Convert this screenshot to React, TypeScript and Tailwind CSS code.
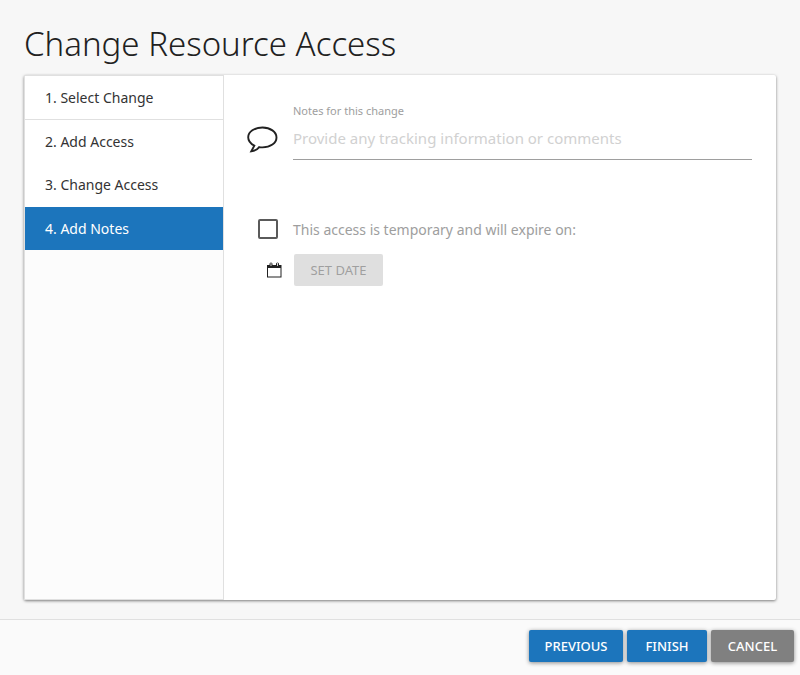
import { useState } from "react";

const steps = ["Select Change", "Add Access", "Change Access", "Add Notes"];

const CommentIcon = () => (
  <svg viewBox="0 0 32 28" className="h-7 w-8 shrink-0" fill="none" stroke="#212121" strokeWidth="1.9" strokeLinejoin="miter" aria-hidden="true">
    <path d="M16.500 1.500C8.500 1.500 2.200 5.800 2.200 11.300C2.200 14.700 4.400 17.700 8.300 19.700L5.300 25.300C9 24.800 11.300 23.600 13.200 21.100C14.200 21.300 15.300 21.400 16.500 21.400C24.300 21.400 30.500 17.200 30.500 11.500C30.500 5.800 24.300 1.500 16.500 1.500Z" />
  </svg>
);

const CalendarIcon = () => (
  <svg viewBox="0 0 16 16" className="size-4 shrink-0" fill="none" stroke="#212121" aria-hidden="true">
    <rect x="1.500" y="3.500" width="13.500" height="11.500" />
    <path d="M1.500 4.500H15" strokeWidth="3" />
    <path d="M5 2V4M11.500 2V4" strokeWidth="3" strokeLinecap="round" />
    <path d="M5 1V4M11.500 1V4" stroke="#d0d0d0" strokeWidth="1" />
  </svg>
);

const raised = "h-8 rounded-xs pt-px text-[13px] font-medium text-white shadow-[0_1px_4px_rgba(0,0,0,0.45)]";

export default function App() {
  const [current, setCurrent] = useState(3);
  const [notes, setNotes] = useState("");
  const [temporary, setTemporary] = useState(false);

  return (
    <div className="flex min-h-screen flex-col bg-[#f7f7f7] font-['Noto_Sans','Open_Sans',sans-serif] text-[#212121]">
      <main className="flex flex-1 flex-col px-6 pt-5 pb-[19px]">
        <h1 className="pb-[7px] text-[33px] leading-12 font-light">Change Resource Access</h1>

        <section className="flex flex-1 rounded-xs bg-white shadow-[0_1px_3px_rgba(0,0,0,0.5)]">
          <nav className="w-[200px] shrink-0 border border-[#e0e0e0] bg-[#fcfcfc]">
            <ol>
              {steps.map((step, i) => (
                <li key={step} className="bg-white first:border-b first:border-[#e0e0e0] last:pt-px">
                  <button
                    type="button"
                    onClick={() => setCurrent(i)}
                    aria-current={i === current ? "step" : undefined}
                    className={`block h-[43px] w-full px-5 text-left text-sm ${i === current ? "bg-[#1c75bc] text-white" : "text-[#333]"}`}
                  >
                    {i + 1}. {step}
                  </button>
                </li>
              ))}
            </ol>
          </nav>

          <form className="flex-1 pt-6 pr-6 pl-[22px]" onSubmit={(e) => e.preventDefault()}>
            <div className="flex items-end">
              <div className="mr-[15px] pb-1.5">
                <CommentIcon />
              </div>
              <div className="flex-1">
                <label htmlFor="notes" className="block text-[11px] leading-6 text-[#9e9e9e]">
                  Notes for this change
                </label>
                <input
                  id="notes"
                  type="text"
                  value={notes}
                  onChange={(e) => setNotes(e.target.value)}
                  placeholder="Provide any tracking information or comments"
                  className="block h-[37px] w-full border-b border-[#9e9e9e] pb-1.5 text-[15px] outline-none placeholder:text-[#d1d1d1]"
                />
              </div>
            </div>

            <div className="mt-[59px] flex h-5 items-center">
              <input
                id="temporary"
                type="checkbox"
                checked={temporary}
                onChange={(e) => setTemporary(e.target.checked)}
                className="mr-[15px] ml-3 size-5 appearance-none rounded-xs border-2 border-[#5a5a5a] checked:bg-[#1c75bc]"
              />
              <label htmlFor="temporary" className="pt-0.5 text-sm text-[#9e9e9e]">
                This access is temporary and will expire on:
              </label>
            </div>

            <div className="mt-[15px] flex items-center">
              <span className="mr-3 ml-5">
                <CalendarIcon />
              </span>
              <button type="button" disabled={!temporary} className="h-8 w-[89px] rounded-xs bg-[#dfdfdf] pt-px text-[13px] text-[#9f9f9f]">
                SET DATE
              </button>
            </div>
          </form>
        </section>
      </main>

      <footer className="flex justify-end gap-1 border-t border-[#e0e0e0] bg-[#fafafa] px-1.5 pt-2.5 pb-[13px]">
        <button type="button" className={`w-[94px] bg-[#1c75bc] ${raised}`}>PREVIOUS</button>
        <button type="button" className={`w-20 bg-[#1c75bc] ${raised}`}>FINISH</button>
        <button type="button" className={`w-[83px] bg-[#808080] ${raised}`}>CANCEL</button>
      </footer>
    </div>
  );
}
